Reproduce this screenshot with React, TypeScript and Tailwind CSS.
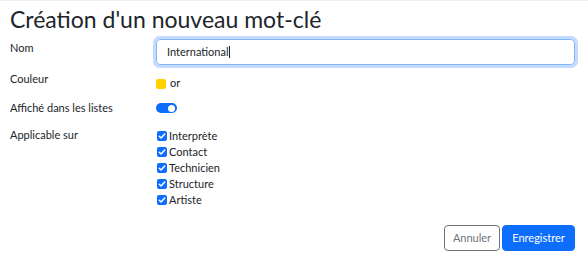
import React from "react";

function Check() {
  return (
    <span className="mt-[3px] mr-[2px] flex h-[10px] w-[10px] shrink-0 items-center justify-center rounded-[2px] bg-[#0d6efd]">
      <svg width="8" height="8" viewBox="0 0 8 8" fill="none">
        <path d="M1.3 4.2 L3.1 6 L6.7 2" stroke="white" strokeWidth="1.5" strokeLinecap="round" strokeLinejoin="round" />
      </svg>
    </span>
  );
}

export default function App() {
  const items = ["Interprète", "Contact", "Technicien", "Structure", "Artiste"];
  return (
    <div className="h-[273px] w-[588px] border-t border-[#f1f1f1] bg-white text-[#212529]" style={{ fontFamily: "Lato, 'Noto Sans', sans-serif" }}>
      <h1 className="mt-[4px] pl-[10px] text-[23px] leading-[28px] font-normal">Création d'un nouveau mot-clé</h1>
      <div className="flex flex-col pr-[13px] text-[11px] leading-[16px]">
        <div className="mt-[6px] flex">
          <div className="mt-[1px] w-[156px] shrink-0 pl-[10px]">Nom</div>
          <div className="flex h-[26px] flex-1 items-center rounded-[4px] border border-[#86b7fe] pl-[10px] shadow-[0_0_0_3px_rgba(13,110,253,0.25)]">
            <span>International</span>
            <span className="h-[12px] w-[1px] bg-[#212529]" />
          </div>
        </div>

        <div className="mt-[6px] flex">
          <div className="w-[156px] shrink-0 pl-[10px]">Couleur</div>
          <div className="mt-[4px] flex">
            <span className="mt-[4px] h-[10px] w-[10px] rounded-[2px] bg-[#ffd200]" />
            <span className="ml-[4px]">or</span>
          </div>
        </div>

        <div className="mt-[9px] flex">
          <div className="w-[156px] shrink-0 pl-[10px]">Affiché dans les listes</div>
          <div className="mt-[3px]">
            <span className="relative flex h-[10px] w-[21px] items-center rounded-full bg-[#0d6efd]">
              <span className="absolute right-[2px] h-[7px] w-[7px] rounded-full bg-white" />
            </span>
          </div>
        </div>

        <div className="mt-[11px] flex">
          <div className="w-[156px] shrink-0 pl-[10px]">Applicable sur</div>
          <div className="mt-[1px] flex flex-col pl-[1px]">
            {items.map((t) => (
              <div key={t} className="flex">
                <Check />
                <span>{t}</span>
              </div>
            ))}
          </div>
        </div>
      </div>
      <div className="mt-[17px] flex justify-end gap-[2px] pr-[13px] text-[11px]">
        <button className="h-[26px] w-[56px] rounded-[4px] border border-[#6c757d] bg-white text-[#6c757d]">Annuler</button>
        <button className="h-[26px] w-[73px] rounded-[4px] border border-[#0d6efd] bg-[#0d6efd] text-white">Enregistrer</button>
      </div>
    </div>
  );
}
